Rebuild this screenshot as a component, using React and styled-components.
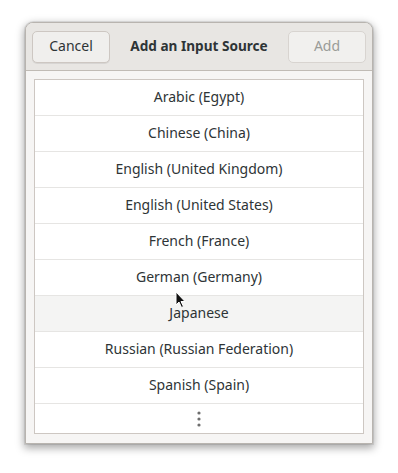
import React from "react";
import styled, { createGlobalStyle } from "styled-components";

const GlobalStyle = createGlobalStyle`
  html, body {
    margin: 0;
    padding: 0;
    background: #ffffff;
  }
  body {
    font-family: "Noto Sans", "Open Sans", sans-serif;
    color: #2e3436;
  }
`;

const languages = [
  "Arabic (Egypt)",
  "Chinese (China)",
  "English (United Kingdom)",
  "English (United States)",
  "French (France)",
  "German (Germany)",
  "Japanese",
  "Russian (Russian Federation)",
  "Spanish (Spain)",
];

const Page = styled.div`
  width: 398px;
  height: 473px;
  padding: 22px 0 0 25px;
  box-sizing: border-box;
  position: relative;
`;

const Dialog = styled.div`
  width: 348px;
  height: 422px;
  box-sizing: border-box;
  display: flex;
  flex-direction: column;
  background: #f6f5f4;
  border: 1px solid #b8b4af;
  border-radius: 8px 8px 0 0;
  box-shadow: 0 3px 9px 1px rgba(0, 0, 0, 0.35), 0 0 0 1px rgba(0, 0, 0, 0.08);
  overflow: hidden;
`;

const HeaderBar = styled.div`
  height: 47px;
  flex-shrink: 0;
  display: flex;
  align-items: center;
  justify-content: space-between;
  padding: 0 6px;
  background: #e8e6e3;
  border-bottom: 1px solid #c0bbb5;
`;

const Title = styled.div`
  font-size: 13.6px;
  font-weight: 700;
  color: #2e3436;
  padding-bottom: 3px;
`;

const HeaderButton = styled.button`
  width: 78px;
  height: 32px;
  border-radius: 5px;
  border: 1px solid ${(p) => (p.disabled ? "#d8d4d0" : "#cdc7c2")};
  background: ${(p) => (p.disabled ? "#f1f0ee" : "#f0efed")};
  box-shadow: ${(p) => (p.disabled ? "none" : "0 1px 0 rgba(0,0,0,0.07)")};
  color: ${(p) => (p.disabled ? "#9a9c98" : "#2e3436")};
  font-family: "Noto Sans", "Open Sans", sans-serif;
  font-size: 14px;
  padding: 0 0 3px 0;
`;

const Body = styled.div`
  flex: 1;
  padding: 8px 8px 9px 8px;
  display: flex;
`;

const List = styled.div`
  flex: 1;
  background: #ffffff;
  border: 1px solid #cdc7c2;
  display: flex;
  flex-direction: column;
`;

const Row = styled.div`
  height: 35px;
  flex-shrink: 0;
  box-sizing: content-box;
  display: flex;
  align-items: center;
  justify-content: center;
  font-size: 14px;
  color: #2e3436;
  padding-bottom: 0;
  border-bottom: 1px solid #e6e5e3;
  background: ${(p) => (p.$hover ? "#f4f4f3" : "#ffffff")};
`;

const RowLabel = styled.span`
  margin-bottom: 3px;
`;

const MoreRow = styled.div`
  flex: 1;
  display: flex;
  align-items: center;
  justify-content: center;
`;

const Cursor = styled.svg`
  position: absolute;
  left: 175px;
  top: 291px;
`;

export default function App() {
  return (
    <>
      <GlobalStyle />
      <Page>
        <Dialog>
          <HeaderBar>
            <HeaderButton>Cancel</HeaderButton>
            <Title>Add an Input Source</Title>
            <HeaderButton disabled>Add</HeaderButton>
          </HeaderBar>
          <Body>
            <List>
              {languages.map((name) => (
                <Row key={name} $hover={name === "Japanese"}>
                  <RowLabel>{name}</RowLabel>
                </Row>
              ))}
              <MoreRow>
                <svg width="4" height="16" viewBox="0 0 4 16">
                  <circle cx="2" cy="2" r="1.6" fill="#6e6e6e" />
                  <circle cx="2" cy="8" r="1.6" fill="#6e6e6e" />
                  <circle cx="2" cy="14" r="1.6" fill="#6e6e6e" />
                </svg>
              </MoreRow>
            </List>
          </Body>
        </Dialog>
        <Cursor width="12" height="18" viewBox="0 0 12 18">
          <path
            d="M1 1 L1 14 L4 11 L6.5 16.5 L8.5 15.5 L6 10.5 L10 10.5 Z"
            fill="#111"
            stroke="#fff"
            strokeWidth="1"
          />
        </Cursor>
      </Page>
    </>
  );
}
